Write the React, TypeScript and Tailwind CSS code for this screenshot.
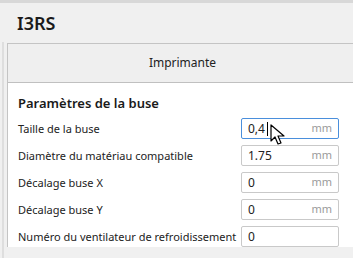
import React from "react";

const rows = [
  { label: "Taille de la buse", value: "0,4", unit: "mm", focus: true },
  { label: "Diamètre du matériau compatible", value: "1.75", unit: "mm" },
  { label: "Décalage buse X", value: "0", unit: "mm" },
  { label: "Décalage buse Y", value: "0", unit: "mm" },
  { label: "Numéro du ventilateur de refroidissement", value: "0", unit: "" },
];

function Cursor() {
  return (
    <svg className="absolute left-[28px] top-[5px]" width="16" height="23" viewBox="0 0 16 23">
      <path d="M1 1 L1 17 L5 13 L8 20 L11 19 L8 12 L14 12 Z" fill="#ffffff" stroke="#000000" strokeWidth="1.2" strokeLinejoin="round" />
    </svg>
  );
}

export default function App() {
  return (
    <div
      className="w-[353px] h-[258px] overflow-hidden bg-[#f0f0f0] relative text-[#222]"
      style={{ fontFamily: '"Noto Sans", "Open Sans", sans-serif' }}
    >
      <div className="h-[3px] bg-[#d8d8d8]" />
      <div className="h-[40px] pl-[17px] pt-[7px] text-[18px] font-semibold leading-[26px] text-[#1a1a1a]">I3RS</div>
      <div className="absolute left-[2px] top-[42px] bottom-0 w-[2px] bg-[#dedede]" />
      <div className="ml-[7px] w-[360px] border-l border-t border-[#c4c4c4] bg-white">
        <div className="h-[39px] bg-[#efefef] border-b border-[#c0c0c0] flex items-center justify-center text-[12px]">
          <span className="pr-[10px]">Imprimante</span>
        </div>
        <div className="pl-[10px] pt-[11px]">
          <div className="text-[13px] font-semibold leading-[18px] text-[#1a1a1a]">Paramètres de la buse</div>
          <div className="flex flex-col gap-[6px] mt-[6px]">
            {rows.map((r) => (
              <div key={r.label} className="flex items-center h-[21px]">
                <div className="w-[223px] text-[11px] leading-[14px]">{r.label}</div>
                <div
                  className={
                    "relative h-[21px] w-[98px] rounded-[2px] border bg-white flex items-center pl-[6px] pr-[6px] text-[12px] " +
                    (r.focus ? "border-[#4a8fdc]" : "border-[#c9c9c9]")
                  }
                >
                  <span className="flex-1">
                    {r.value}
                    {r.focus && <span className="inline-block w-px h-[14px] bg-black align-middle ml-[2px]" />}
                  </span>
                  {r.unit && <span className="text-[11px] text-[#9a9a9a]">{r.unit}</span>}
                  {r.focus && <Cursor />}
                </div>
              </div>
            ))}
          </div>
        </div>
      </div>
    </div>
  );
}
